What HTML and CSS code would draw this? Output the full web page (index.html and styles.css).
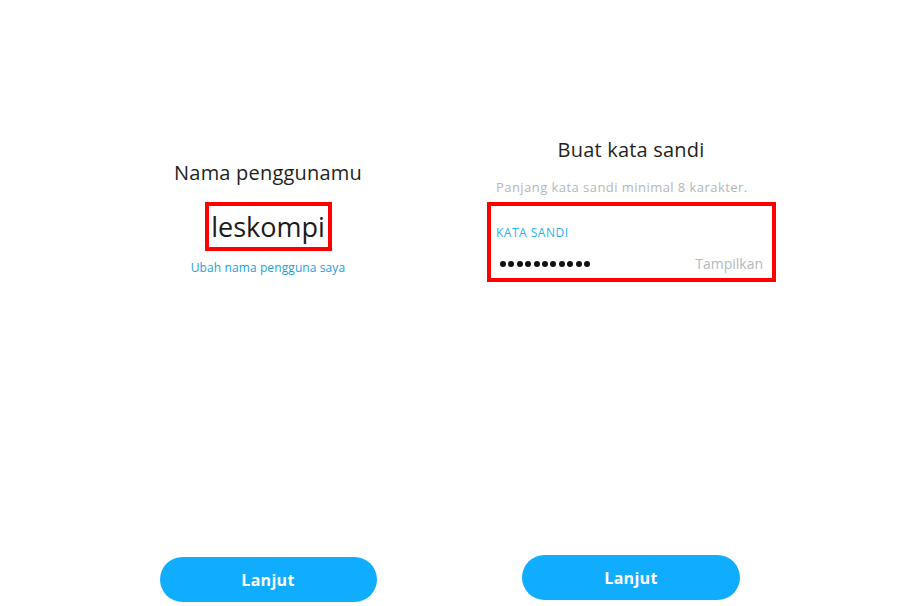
FILE: index.html
```html
<!DOCTYPE html>
<html lang="id">
<head>
<meta charset="utf-8">
<title>Snapchat daftar</title>
<link rel="stylesheet" href="styles.css">
</head>
<body>
<div class="page">
  <section class="col col-left">
    <h1 class="title title-left">Nama penggunamu</h1>
    <div class="hl hl-user"><span class="username">leskompi</span></div>
    <a class="link">Ubah nama pengguna saya</a>
    <div class="spacer"></div>
    <button class="btn btn-left">Lanjut</button>
  </section>
  <section class="col col-right">
    <h1 class="title title-right">Buat kata sandi</h1>
    <p class="hint">Panjang kata sandi minimal 8 karakter.</p>
    <div class="hl hl-pass">
      <div class="label">KATA SANDI</div>
      <div class="pass-row">
        <div class="dots">
          <span></span><span></span><span></span><span></span><span></span><span></span><span></span><span></span><span></span><span></span><span></span>
        </div>
        <span class="show">Tampilkan</span>
      </div>
    </div>
    <div class="spacer"></div>
    <button class="btn btn-right">Lanjut</button>
  </section>
</div>
</body>
</html>
```
FILE: styles.css
```css
html, body {
  margin: 0;
  padding: 0;
  background: #ffffff;
}
body {
  font-family: "Open Sans", "Noto Sans", sans-serif;
  color: #1f1f21;
}
.page {
  display: flex;
  width: 900px;
  height: 606px;
}
.col {
  display: flex;
  flex-direction: column;
  align-items: center;
  box-sizing: border-box;
  height: 606px;
}
.col-left {
  width: 236px;
  margin-left: 150px;
  padding-top: 161px;
}
.col-right {
  width: 302px;
  margin-left: 94px;
  padding-top: 138px;
}
.title {
  margin: 0;
  font-size: 20px;
  line-height: 24px;
  font-weight: 400;
  letter-spacing: 0.2px;
  color: #1f1f21;
  white-space: nowrap;
}
.title-left {
  margin-bottom: 1px;
}
.hl {
  border: 4px solid #ff0000;
  box-sizing: border-box;
}
.hl-user {
  margin-top: 16px;
  width: 127px;
  height: 49px;
  display: flex;
  align-items: center;
  justify-content: center;
}
.username {
  font-size: 27px;
  line-height: 32px;
  letter-spacing: 0;
  color: #1b1b1d;
}
.link {
  margin-top: 9px;
  font-size: 12px;
  line-height: 16px;
  color: #1a9fdf;
  letter-spacing: 0.1px;
  white-space: nowrap;
}
.spacer {
  flex: 1;
}
.btn {
  border: none;
  border-radius: 23px;
  background: #10adff;
  color: #ffffff;
  font-family: "Open Sans", "Noto Sans", sans-serif;
  font-weight: 700;
  font-size: 16px;
  letter-spacing: 0.3px;
  height: 45px;
  padding: 0;
}
.btn-left {
  width: 217px;
  margin-bottom: 4px;
}
.btn-right {
  width: 218px;
  margin-bottom: 6px;
}
.hint {
  margin: 16px 0 0 0;
  font-size: 13px;
  line-height: 18px;
  color: #b3b7bb;
  letter-spacing: 0.45px;
  width: 302px;
  box-sizing: border-box;
  padding-left: 16px;
  white-space: nowrap;
}
.hl-pass {
  margin-top: 6px;
  width: 289px;
  height: 80px;
  align-self: flex-start;
  margin-left: 7px;
  padding: 19px 9px 0 5px;
}
.label {
  font-size: 12px;
  line-height: 16px;
  color: #2cb2f0;
  letter-spacing: 0.5px;
}
.pass-row {
  margin-top: 13px;
  display: flex;
  align-items: center;
  justify-content: space-between;
  height: 20px;
}
.dots {
  display: flex;
  gap: 2.4px;
  padding-left: 4px;
}
.dots span {
  width: 6px;
  height: 6px;
  border-radius: 50%;
  background: #111111;
}
.show {
  font-size: 14px;
  line-height: 18px;
  color: #b5b9bd;
  letter-spacing: 0;
}
```
